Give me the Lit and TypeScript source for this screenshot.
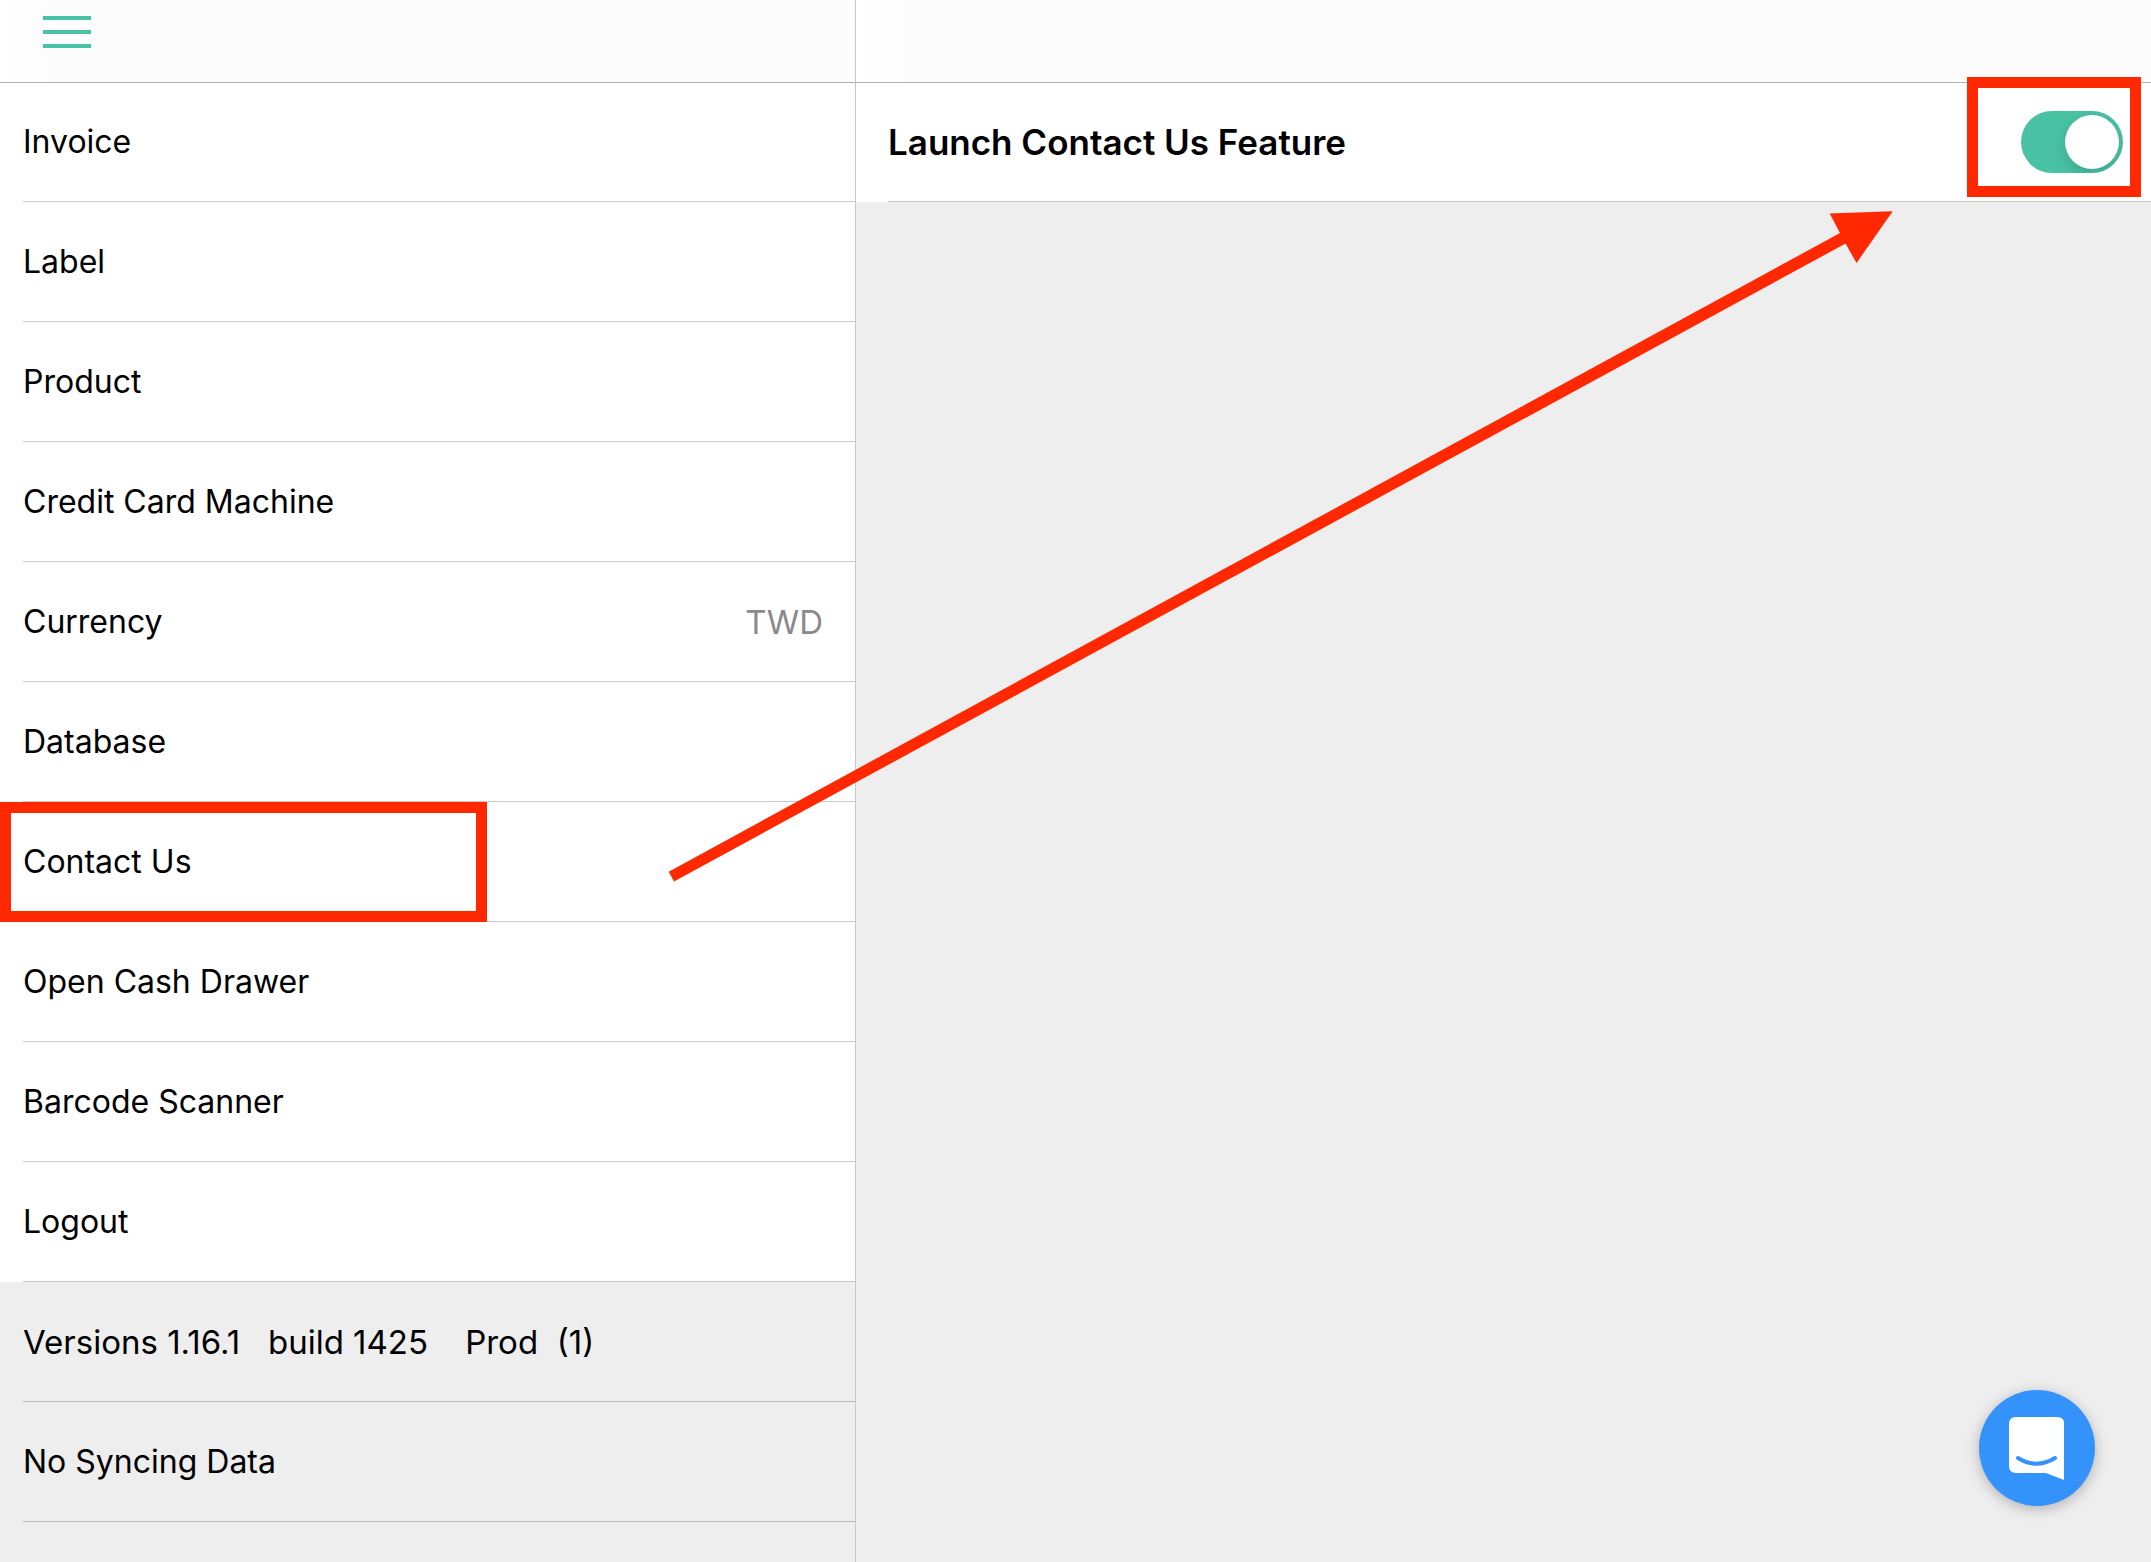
import { LitElement, html, css, svg } from "lit";
import { customElement, property, state } from "lit/decorators.js";
import { classMap } from "lit/directives/class-map.js";

interface Item {
  label: string;
  value?: string;
  marked?: boolean;
}

interface Status {
  text: string;
  version?: boolean;
}

const ITEMS: Item[] = [
  { label: "Invoice" },
  { label: "Label" },
  { label: "Product" },
  { label: "Credit Card Machine" },
  { label: "Currency", value: "TWD" },
  { label: "Database" },
  { label: "Contact Us", marked: true },
  { label: "Open Cash Drawer" },
  { label: "Barcode Scanner" },
  { label: "Logout" },
];

const STATUS: Status[] = [
  {
    text: "Versions 1.16.1\u00a0\u00a0\u00a0build 1425\u00a0\u00a0\u00a0\u00a0Prod\u00a0\u00a0(1)",
    version: true,
  },
  { text: "No Syncing Data" },
];

@customElement("toggle-switch")
export class ToggleSwitch extends LitElement {
  @property({ type: Boolean }) checked = false;
  @property() label = "";

  static styles = css`
    :host {
      display: block;
    }
    .switch {
      appearance: none;
      display: flex;
      align-items: center;
      box-sizing: border-box;
      width: 102px;
      height: 62px;
      margin: 0;
      padding: 4px;
      border-radius: 31px;
      background: #e5e5ea;
      overflow: hidden;
      cursor: pointer;
    }
    .switch::before {
      content: "";
      width: 54px;
      height: 54px;
      border-radius: 50%;
      background: #fff;
      box-shadow: 0 5px 14px rgba(0, 0, 0, 0.15);
    }
    .switch:checked {
      justify-content: flex-end;
      background: #49c2a4;
    }
  `;

  render() {
    return html`<input
      class="switch"
      type="checkbox"
      role="switch"
      aria-label=${this.label}
      .checked=${this.checked}
    />`;
  }
}

@customElement("app-root")
export class AppRoot extends LitElement {
  @state() private enabled = true;

  static styles = css`
    :host {
      display: block;
      font-family: Inter, "Liberation Sans", sans-serif;
      font-size: 32px;
      line-height: 40px;
      color: #000;
    }
    .page {
      position: relative;
      display: grid;
      grid-template-columns: 856fr 1295fr;
      min-height: 100vh;
      background: #eee;
      overflow: hidden;
    }
    .side {
      border-right: 1px solid #c7c7c9;
    }
    .bar {
      position: relative;
      z-index: 1;
      display: flex;
      align-items: flex-start;
      box-sizing: border-box;
      height: 82px;
      padding: 8px 35px;
      background: linear-gradient(90deg, #fff, #fcfcfc 60px);
      box-shadow: 0 1px #b2b2b2;
    }
    .menu {
      display: flex;
      padding: 8px;
      border: 0;
      background: none;
      cursor: pointer;
    }
    .list {
      margin: 0;
      padding: 0;
      list-style: none;
    }
    .item {
      position: relative;
      padding-left: 23px;
      background: #fff;
    }
    .item.status {
      background: none;
    }
    .row {
      display: flex;
      align-items: center;
      justify-content: space-between;
      box-sizing: border-box;
      width: 100%;
      height: 120px;
      padding: 0 32px 0 0;
      border: 0;
      border-bottom: 1px solid #c7c7c9;
      background: none;
      font: inherit;
      color: inherit;
      text-align: left;
    }
    .status .row {
      border-color: #bababc;
    }
    button.row {
      cursor: pointer;
    }
    .value,
    .version {
      font-size: 33px;
    }
    .value {
      color: #8a8a8e;
    }
    .setting {
      position: relative;
      padding-left: 32px;
      background: #fff;
    }
    .setting .row {
      padding-right: 28px;
    }
    .title {
      margin: 0;
      font-size: 35px;
      font-weight: 600;
    }
    .mark {
      position: absolute;
      z-index: 2;
      box-sizing: border-box;
      height: 120px;
      border: 11px solid #ff2800;
      pointer-events: none;
    }
    .mark.choice {
      top: 0;
      left: 0;
      width: 487px;
    }
    .mark.toggle {
      top: -5px;
      right: 10px;
      width: 174px;
    }
    .arrow {
      position: absolute;
      top: 0;
      left: 0;
      width: 100%;
      pointer-events: none;
    }
    .chat {
      position: absolute;
      right: 56px;
      bottom: 56px;
      display: flex;
      width: 116px;
      height: 116px;
      padding: 0;
      border: 0;
      border-radius: 50%;
      background: #3493fb;
      box-shadow: 0 3px 14px rgba(0, 0, 0, 0.26);
      cursor: pointer;
    }
  `;

  private renderItem(item: Item) {
    return html`<li class="item">
      <button class="row" type="button">
        <span>${item.label}</span>
        ${item.value ? html`<span class="value">${item.value}</span>` : null}
      </button>
      ${item.marked ? html`<span class="mark choice"></span>` : null}
    </li>`;
  }

  private renderStatus(status: Status) {
    return html`<li class=${classMap({ item: true, status: true, version: !!status.version })}>
      <div class="row">${status.text}</div>
    </li>`;
  }

  render() {
    return html`
      <div class="page">
        <nav class="side">
          <header class="bar">
            <button class="menu" type="button" aria-label="Menu">
              <svg width="48" height="32" viewBox="0 0 48 32" fill="#49c2a4">
                ${[0, 14, 28].map((y) => svg`<rect y=${y} width="48" height="4" />`)}
              </svg>
            </button>
          </header>
          <ul class="list">
            ${ITEMS.map((item) => this.renderItem(item))}
            ${STATUS.map((status) => this.renderStatus(status))}
          </ul>
        </nav>
        <main>
          <header class="bar"></header>
          <section class="setting">
            <div class="row">
              <h1 class="title">Launch Contact Us Feature</h1>
              <toggle-switch .checked=${this.enabled} label="Launch Contact Us Feature"></toggle-switch>
            </div>
            <span class="mark toggle"></span>
          </section>
        </main>
        <svg class="arrow" viewBox="0 0 2151 1562" fill="#ff2800" aria-hidden="true">
          <path d="M668.7 871.7 1840 233 1829.7 213.5 1892.7 211.2 1856.5 263 1845.6 243.5 674 881.5Z" />
        </svg>
        <button class="chat" type="button" aria-label="Chat">
          <svg width="116" height="116" viewBox="0 0 116 116">
            <path
              d="M37 27H78.500Q85 27 85 33.500V90L67 83H37Q30 83 30 76V34Q30 27 37 27Z"
              fill="#fff"
            />
            <path
              d="M39 68Q57.500 79.500 76 68"
              fill="none"
              stroke="#3493fb"
              stroke-width="4"
              stroke-linecap="round"
            />
          </svg>
        </button>
      </div>
    `;
  }
}
